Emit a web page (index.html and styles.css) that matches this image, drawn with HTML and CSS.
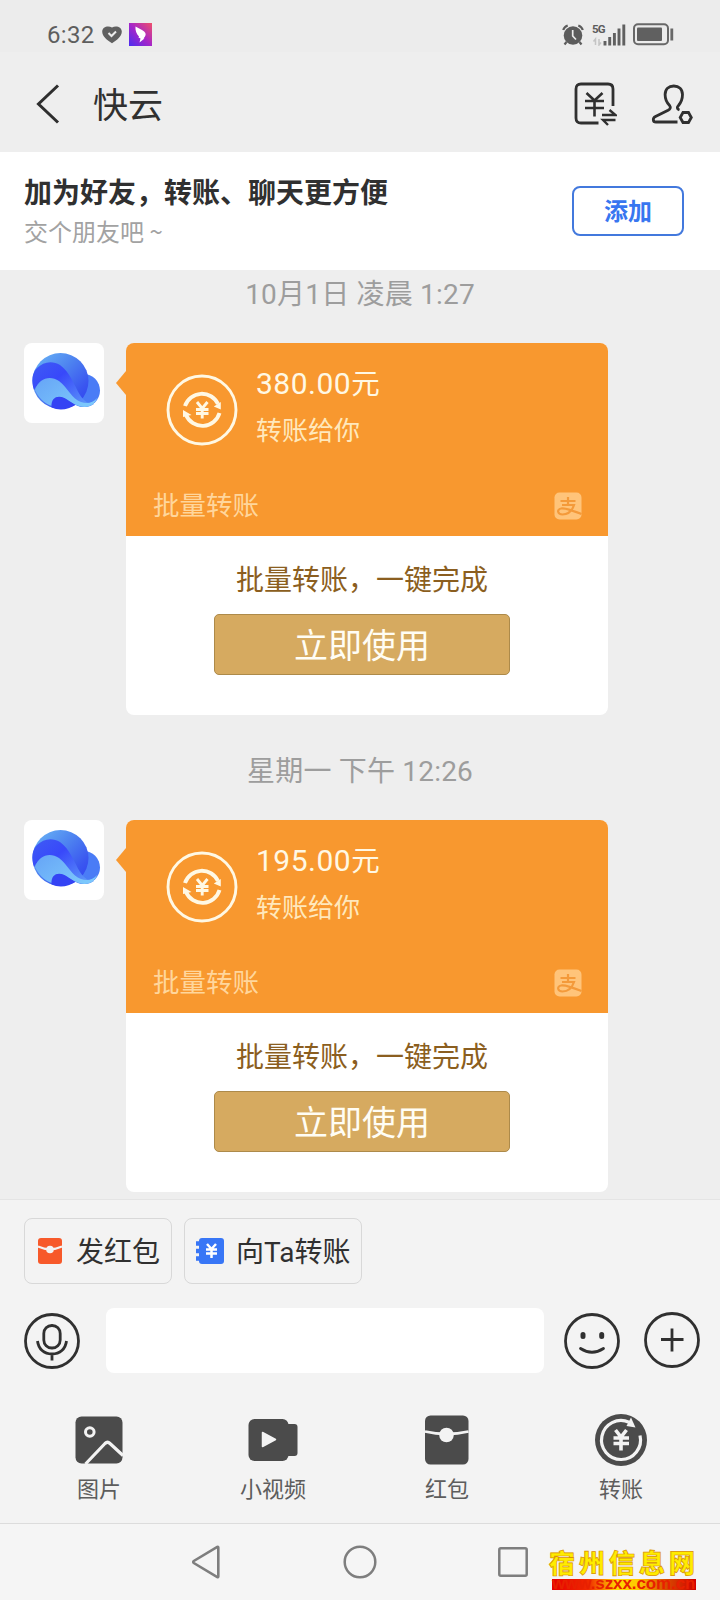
FILE: index.html
```html
<!DOCTYPE html>
<html lang="zh-CN">
<head>
<meta charset="utf-8">
<title>快云</title>
<link rel="stylesheet" href="styles.css">
</head>
<body>
<svg class="defs" width="0" height="0" aria-hidden="true">
  <defs>
    <linearGradient id="gTop" x1="0" y1="0" x2="1" y2="1"><stop offset="0" stop-color="#6cb8f6"/><stop offset=".4" stop-color="#4f86f0"/><stop offset=".75" stop-color="#3a56f0"/><stop offset="1" stop-color="#2d3ff0"/></linearGradient>
    <linearGradient id="gMid" x1="0" y1="0" x2="1" y2=".9"><stop offset="0" stop-color="#3f5cf4"/><stop offset=".4" stop-color="#3848fa"/><stop offset="1" stop-color="#5f9df8"/></linearGradient>
    <linearGradient id="gWave" x1="0" y1="0" x2="1" y2=".6"><stop offset="0" stop-color="#66a4f6"/><stop offset="1" stop-color="#7cc8fc"/></linearGradient>
    <linearGradient id="gDing" x1="0" y1="1" x2="1" y2="0"><stop offset="0" stop-color="#4a2cf0"/><stop offset=".5" stop-color="#a626c8"/><stop offset="1" stop-color="#f0506a"/></linearGradient>
    <symbol id="cloud" viewBox="0 0 80 80">
      <circle cx="59.500" cy="47.500" r="16.500" fill="#4a7cf6"/>
      <circle cx="36.500" cy="38" r="28" fill="url(#gTop)"/>
      <path d="M10 47C7 38 8 30 13 25c6-6 15-8 23-3 10 7 14 20 20 30 4 6 9 10 14 9-4 3-10 4-15 2C44 58 40 46 34 39 26 33 16 36 10 47z" fill="url(#gMid)"/>
      <path d="M11 47c4-12 15-15 24-9 9 7 13 18 22 21 6 2 12 1 16-4-2 7-9 10-16 8.500-5-1-8-3-12-5-6-5-15-8-17 4.500-8-2.500-14-9-17-16z" fill="url(#gWave)"/>
      <path d="M27.500 64.500c-1-13 10-13 17-7l7 4.500c-7 4.500-16 6-24 2.500z" fill="#3443f4"/>
    </symbol>
    <symbol id="coin" viewBox="0 0 72 72">
      <g fill="none" stroke="#fff8e4">
        <circle cx="36" cy="36" r="34" stroke-width="2.900"/>
        <path d="M19 32A17.800 17.800 0 0 1 52 30M53.500 39A17.800 17.800 0 0 1 20 41" stroke-width="3.900"/>
        <path d="M31 28l5.200 6.500L41.500 28M30 35.500h12.500M30 39.500h12.500M36.200 34v10.500" stroke-width="2.900"/>
      </g>
      <path d="M54.800 28v7.500l-7-3zM17 36v7l8.500-2z" fill="#fff8e4"/>
    </symbol>
    <symbol id="pay" viewBox="0 0 28 28">
      <rect x=".5" y=".5" width="27" height="27" rx="5" fill="#ffc47a"/>
      <path d="M6.500 9h15M14 5v7.500M8 13h12c-2 6-6 9.500-11.500 9.500-5 0-6-5-1.500-6C11 15.500 20 19 27.500 22" fill="none" stroke="#f49a3a" stroke-width="2.200"/>
    </symbol>
  </defs>
</svg>
<div class="screen">
  <div class="status">
    <span class="clock">6:32</span>
    <svg class="heart" width="20" height="18" viewBox="0 0 20 18"><path d="M10 17.300C5 14 .2 10.500.2 5.500.2 1 6 -1 10 1.500 14-1 19.800 1 19.800 5.500c0 5-4.800 8.500-9.800 11.800z" fill="#606060"/><path d="M6.500 7l3 3L14 5.500" fill="none" stroke="#ececec" stroke-width="2"/></svg>
    <svg class="ding" width="23" height="23" viewBox="0 0 23 23"><rect width="23" height="23" fill="url(#gDing)"/><path d="M6.500 3.500l6.500 3.500c3.500 2 4.500 4 3 6.500l-1.500 2h1L10.500 19.500l1-4-2-1 .5-1C7.500 11 6 7 6.500 3.500z" fill="#fff"/></svg>
    <svg class="alarm" width="22" height="22" viewBox="0 0 22 22"><circle cx="11" cy="11.500" r="9.300" fill="#5c5c5c"/><path d="M1.200 6a7 7 0 0 1 4.500-4.500M20.800 6a7 7 0 0 0-4.500-4.500M4.500 18l-2 2.500M17.500 18l2 2.500" fill="none" stroke="#5c5c5c" stroke-width="2.200"/><path d="M10.700 6v6l3.300 3.500" fill="none" stroke="#ececec" stroke-width="1.700"/></svg>
    <div class="net"><span>5G</span><svg width="34" height="22" viewBox="0 0 34 22"><path d="M3.500 21v-6l-2 2.500M7 15v6l2-2.500" fill="none" stroke="#c4c4c4" stroke-width="1.500"/><path d="M13 17v4.500M17.700 13v8.500M22.400 9v12.500M27 4.500v17M31.800.5v21" stroke="#606060" stroke-width="2.900" fill="none"/></svg></div>
    <svg class="batt" width="41" height="23" viewBox="0 0 41 23"><rect x="1" y="1.200" width="34" height="20" rx="4" fill="none" stroke="#686868" stroke-width="2"/><rect x="4" y="4.500" width="25" height="13.500" rx="1" fill="#606060"/><path d="M38.800 5.500v12" stroke="#686868" stroke-width="2.800"/></svg>
  </div>
  <div class="header">
    <svg class="back" width="24" height="40" viewBox="0 0 24 40"><path d="M22 1.500L2.500 20 22 38.500" fill="none" stroke="#2e2e2e" stroke-width="3"/></svg>
    <h1>快云</h1>
    <svg class="bill" width="43" height="44" viewBox="0 0 43 44"><g fill="none" stroke="#303030" stroke-width="2.800"><path d="M24.500 41H7q-5 0-5-5V7q0-5 5-5h27q5 0 5 5v17"/><path d="M12.500 11l8 7.500 8-7.500M11 19h19M11 26h19M20.500 18.500V34.500" stroke-width="2.600"/><path d="M28 33h13.500L35.500 28M41.500 38H29l5 5" stroke-width="2.400"/></g></svg>
    <svg class="person" width="42" height="40" viewBox="0 0 42 40"><g fill="none" stroke="#303030" stroke-width="2.800"><path d="M28.500 26c-3-1-2.500-3-1-4.500 2.500-3 4-6 4-11 0-5.500-3.500-8.500-8.700-8.500s-8.700 3-8.700 8.500c0 5 1.500 8 4.500 11 1.500 2 .5 3.500-1.500 4.700L4.500 32.500c-3 1.500-3 5.500.5 5.500h21.500"/><path d="M32 28.500h5.500l2.800 5-2.800 5H32l-2.800-5z"/></g></svg>
  </div>
  <div class="banner">
    <div class="invite"><h2>加为好友，转账、聊天更方便</h2><p>交个朋友吧 ~</p></div>
    <button class="add">添加</button>
  </div>
  <main class="chat">
    <div class="time">10月1日 凌晨 1:27</div>
    <div class="message">
      <svg class="avatar" width="80" height="80"><use href="#cloud"/></svg>
      <article class="card">
        <div class="transfer">
          <div class="summary"><svg width="72" height="72"><use href="#coin"/></svg><div class="words"><strong><b>380.00</b>元</strong><span>转账给你</span></div></div>
          <div class="source"><span>批量转账</span><svg width="28" height="28"><use href="#pay"/></svg></div>
        </div>
        <div class="promo"><p>批量转账，一键完成</p><button>立即使用</button></div>
      </article>
    </div>
    <div class="time second">星期一 下午 12:26</div>
    <div class="message">
      <svg class="avatar" width="80" height="80"><use href="#cloud"/></svg>
      <article class="card">
        <div class="transfer">
          <div class="summary"><svg width="72" height="72"><use href="#coin"/></svg><div class="words"><strong><b>195.00</b>元</strong><span>转账给你</span></div></div>
          <div class="source"><span>批量转账</span><svg width="28" height="28"><use href="#pay"/></svg></div>
        </div>
        <div class="promo"><p>批量转账，一键完成</p><button>立即使用</button></div>
      </article>
    </div>
  </main>
  <section class="composer">
    <div class="chips">
      <div class="chip red"><svg width="26" height="26" viewBox="0 0 26 26"><rect x="1" width="24" height="26" rx="3" fill="#f7592a"/><path d="M1 8.500q12 5.500 24 0" fill="none" stroke="#f3f3f3" stroke-width="2"/><circle cx="13" cy="11.500" r="3.800" fill="#f3f3f3"/></svg><span>发红包</span></div>
      <div class="chip blue"><svg width="28" height="26" viewBox="0 0 28 26"><rect x="3" width="25" height="26" rx="3" fill="#3876f6"/><path d="M0 5.500h5M0 13h5M0 20.500h5" stroke="#3876f6" stroke-width="4.500"/><path d="M11 6l4.500 5L20 6M10 11.500h11M10 15.500h11M15.500 11v9" fill="none" stroke="#fff" stroke-width="2.500"/></svg><span>向Ta转账</span></div>
    </div>
    <div class="entry">
      <svg width="56" height="56" viewBox="0 0 56 56"><g fill="none" stroke="#303030" stroke-width="2.800"><circle cx="28" cy="28" r="26.500"/><rect x="19.800" y="12.500" width="16.400" height="22.500" rx="8"/><path d="M13.500 28c1 8 6.500 13 14.500 13s13.500-5 14.500-13M28 41v6.500"/></g></svg>
      <div class="field"></div>
      <svg class="smile" width="56" height="56" viewBox="0 0 56 56"><g fill="none" stroke="#303030" stroke-width="2.800"><circle cx="28" cy="28" r="26.500"/><path d="M16.500 35.500q11.500 7.500 23 0" stroke-linecap="round"/><path d="M19 21.500v2M37.700 21.500v2" stroke-width="5" stroke-linecap="round"/></g></svg>
      <svg class="plus" width="56" height="56" viewBox="0 0 56 56"><g fill="none" stroke="#303030" stroke-width="2.800"><circle cx="28" cy="28" r="26.500"/><path d="M28 16.500v23M17 27.500h22.500"/></g></svg>
    </div>
    <div class="tools">
      <div class="tool"><svg width="52" height="52" viewBox="0 0 52 52"><rect x="2.500" y="2.500" width="47" height="47" rx="6" fill="#4b4b4b"/><circle cx="16.800" cy="18" r="4.300" fill="none" stroke="#f3f3f3" stroke-width="3"/><path d="M12.500 50L32 29.500q2.500-2.500 5 0l13 12" fill="none" stroke="#f3f3f3" stroke-width="3.200"/></svg><span>图片</span></div>
      <div class="tool"><svg width="52" height="52" viewBox="0 0 52 52"><rect x="1.500" y="5" width="40" height="42" rx="6" fill="#4b4b4b"/><path d="M40 10h7.500q3 0 3 3v26q0 3-3 3H40z" fill="#4b4b4b"/><path d="M15.500 18.500v14l13-7z" fill="#f3f3f3" stroke="#f3f3f3" stroke-width="1.500" stroke-linejoin="round"/></svg><span>小视频</span></div>
      <div class="tool"><svg width="52" height="52" viewBox="0 0 52 52"><rect x="4" y="1.500" width="43.500" height="49" rx="5.500" fill="#4b4b4b"/><path d="M4 17.500q21.500 5 43.500 0" fill="none" stroke="#f3f3f3" stroke-width="2.800"/><circle cx="25.500" cy="21" r="7.300" fill="#f3f3f3"/></svg><span>红包</span></div>
      <div class="tool"><svg width="52" height="52" viewBox="0 0 52 52"><circle cx="26" cy="26" r="26" fill="#4b4b4b"/><path d="M45 21.500A19.500 19.500 0 1 1 34 8.200" fill="none" stroke="#f3f3f3" stroke-width="3.200"/><path d="M36 3.500l4.500 10-9-1.500z" fill="#f3f3f3"/><path d="M20.500 16l5.500 7 5.500-7M18.500 24h15.500M18.500 29.500h15.500M26 23v13.500" fill="none" stroke="#f3f3f3" stroke-width="3.600"/></svg><span>转账</span></div>
    </div>
  </section>
  <nav class="nav">
    <svg class="nback" width="30" height="36" viewBox="0 0 30 36"><path d="M27.300 3.500v29q0 1-1 .5L2.800 19q-1.200-1 0-2L26.300 3q1-.5 1 .5z" fill="none" stroke="#7e7e7e" stroke-width="2.600"/></svg>
    <svg class="nhome" width="34" height="34" viewBox="0 0 34 34"><circle cx="17" cy="17" r="15.300" fill="none" stroke="#7e7e7e" stroke-width="2.500"/></svg>
    <svg class="nrecent" width="30" height="30" viewBox="0 0 30 30"><rect x="1.300" y="1.300" width="27.400" height="27.400" rx="1.500" fill="none" stroke="#7e7e7e" stroke-width="2.500"/></svg>
    <div class="mark"><div class="mark-name">宿州信息网</div><div class="mark-url">www.szxx.com.cn</div></div>
  </nav>
</div>
</body>
</html>
```
FILE: styles.css
```css
* { box-sizing: border-box; }
body { margin: 0; font-family: "Noto Sans CJK SC", sans-serif; color: #303030; background: #eee; }
h1, h2, p { margin: 0; font-weight: 400; }
button { font: inherit; padding: 0; }
svg { display: block; flex: none; }
.defs { position: absolute; }
.screen { width: 720px; height: 1600px; display: flex; flex-direction: column; overflow: hidden; }

.status { height: 52px; background: #ececec; display: flex; padding: 23px 46px 0 47px; align-items: flex-start; }
.clock { font: 24px/25px Roboto, sans-serif; color: #5e5e5e; width: 55px; letter-spacing: .3px; }
.heart { margin-top: 3px; }
.ding { margin-left: 7px; }
.alarm { margin-left: auto; margin-top: 1px; }
.net { margin-left: 8px; position: relative; display: flex; padding-top: 1px; }
.net span { position: absolute; left: 0; top: 0; font: bold 11.500px/12px Roboto, sans-serif; letter-spacing: -.9px; color: #5c5c5c; }
.batt { margin-left: 7px; }

.header { height: 100px; display: flex; align-items: center; padding: 4px 27px 0 36px; }
.header h1 { font-size: 35px; line-height: 50px; margin: -2px auto 0 33px; }
.person { margin-left: 34px; }

.banner { height: 118px; background: #fff; display: flex; justify-content: space-between; align-items: center; padding: 0 36px 0 24px; }
.invite { margin-top: -1px; }
.banner h2 { font-size: 28px; line-height: 40px; font-weight: 700; }
.banner p { font-size: 24px; line-height: 40px; color: #a2a2a2; }
.add { width: 112px; height: 50px; border: 2px solid #4379dd; border-radius: 8px; background: #fff; color: #3876f0; font-size: 24px; line-height: 44px; padding-bottom: 2px; font-weight: 700; }

.chat { height: 929px; }
.time { text-align: center; font-family: Roboto, "Noto Sans CJK SC", sans-serif; font-size: 28px; letter-spacing: .2px; line-height: 40px; color: #9d9d9d; padding-top: 5px; height: 73px; }
.second { height: 105px; padding-top: 37px; }
.message { display: flex; padding-left: 24px; gap: 22px; }
.avatar { background: #fff; border-radius: 8px; }
.card { position: relative; width: 482px; height: 372px; background: #fff; border-radius: 8px; }
.card::before { content: ""; position: absolute; left: -10px; top: 28px; border: 12px solid transparent; border-right: 10px solid #f8982f; border-left: 0; }
.transfer { height: 193px; background: #f8982f; border-radius: 8px 8px 0 0; padding: 17px 26px 0 40px; }
.summary { display: flex; gap: 18px; height: 125px; }
.summary > svg { margin-top: 14px; }
.words { display: flex; flex-direction: column; }
.words strong { font-size: 28.500px; line-height: 44px; height: 44px; font-weight: 400; color: #fff8e4; }
.words b { font: 30px/40px Roboto, sans-serif; letter-spacing: .5px; }
.words span { font-size: 26px; line-height: 50px; color: #ffe8bc; }
.source { display: flex; justify-content: space-between; align-items: center; margin-left: -13px; height: 38px; font-size: 26.500px; line-height: 38px; color: #ffd69c; }
.source svg { margin-top: 3px; }
.promo { display: flex; flex-direction: column; align-items: center; }
.promo p { font-size: 28px; line-height: 40px; padding-top: 22px; height: 78px; color: #8b5e20; margin-left: -10px; }
.promo button { width: 296px; height: 61px; border: 1px solid #ad8a4a; border-radius: 5px; background: #d6aa60; color: #fffdf4; font-size: 34px; line-height: 56px; padding-bottom: 2px; margin-right: 10px; }

.composer { height: 325px; background: #f3f3f3; border-top: 1px solid #e4e4e4; border-bottom: 1px solid #dcdcdc; padding-top: 18px; }
.chips { display: flex; gap: 12px; padding-left: 24px; }
.chip { height: 66px; border: 1px solid #d8d8d8; border-radius: 8px; display: flex; align-items: center; font-family: Roboto, "Noto Sans CJK SC", sans-serif; font-size: 28px; line-height: 40px; white-space: nowrap; }
.chip span { padding-top: 3px; }
.red { width: 148px; padding-left: 12px; gap: 13px; }
.blue { width: 178px; padding-left: 11px; gap: 12px; }
.entry { display: flex; align-items: center; padding-left: 24px; margin-top: 24px; height: 65px; }
.field { width: 438px; height: 65px; border-radius: 8px; background: #fff; margin: 0 20px 0 26px; }
.plus { margin-left: 24px; margin-top: -2px; }
.tools { display: grid; grid-template-columns: repeat(4, 1fr); padding: 41px 12px 0; }
.tool { display: flex; flex-direction: column; align-items: center; font-size: 22px; line-height: 32px; color: #5d5d5d; gap: 5px; }

.nav { position: relative; height: 76px; background: #f5f5f5; display: flex; align-items: center; padding-left: 191px; }
.nhome { margin-left: 122px; }
.nrecent { margin-left: 121px; }
.mark { position: absolute; left: 549px; top: 25px; width: 150px; }
.mark-name { font-size: 26px; line-height: 26px; font-weight: 900; letter-spacing: 4px; white-space: nowrap; color: #ffec00; -webkit-text-stroke: .7px #d99000; }
.mark-url { margin-left: 3px; width: 147px; height: 18px; background: linear-gradient(90deg, #e60000, #f02800 25%, #ffd800 45%, #ffc800 60%, #d85000 78%, #d00000) 0 4px / 144px 11px no-repeat; color: #e82000; font: bold 17px/18px "Liberation Sans", sans-serif; white-space: nowrap; letter-spacing: -.1px; }
```
